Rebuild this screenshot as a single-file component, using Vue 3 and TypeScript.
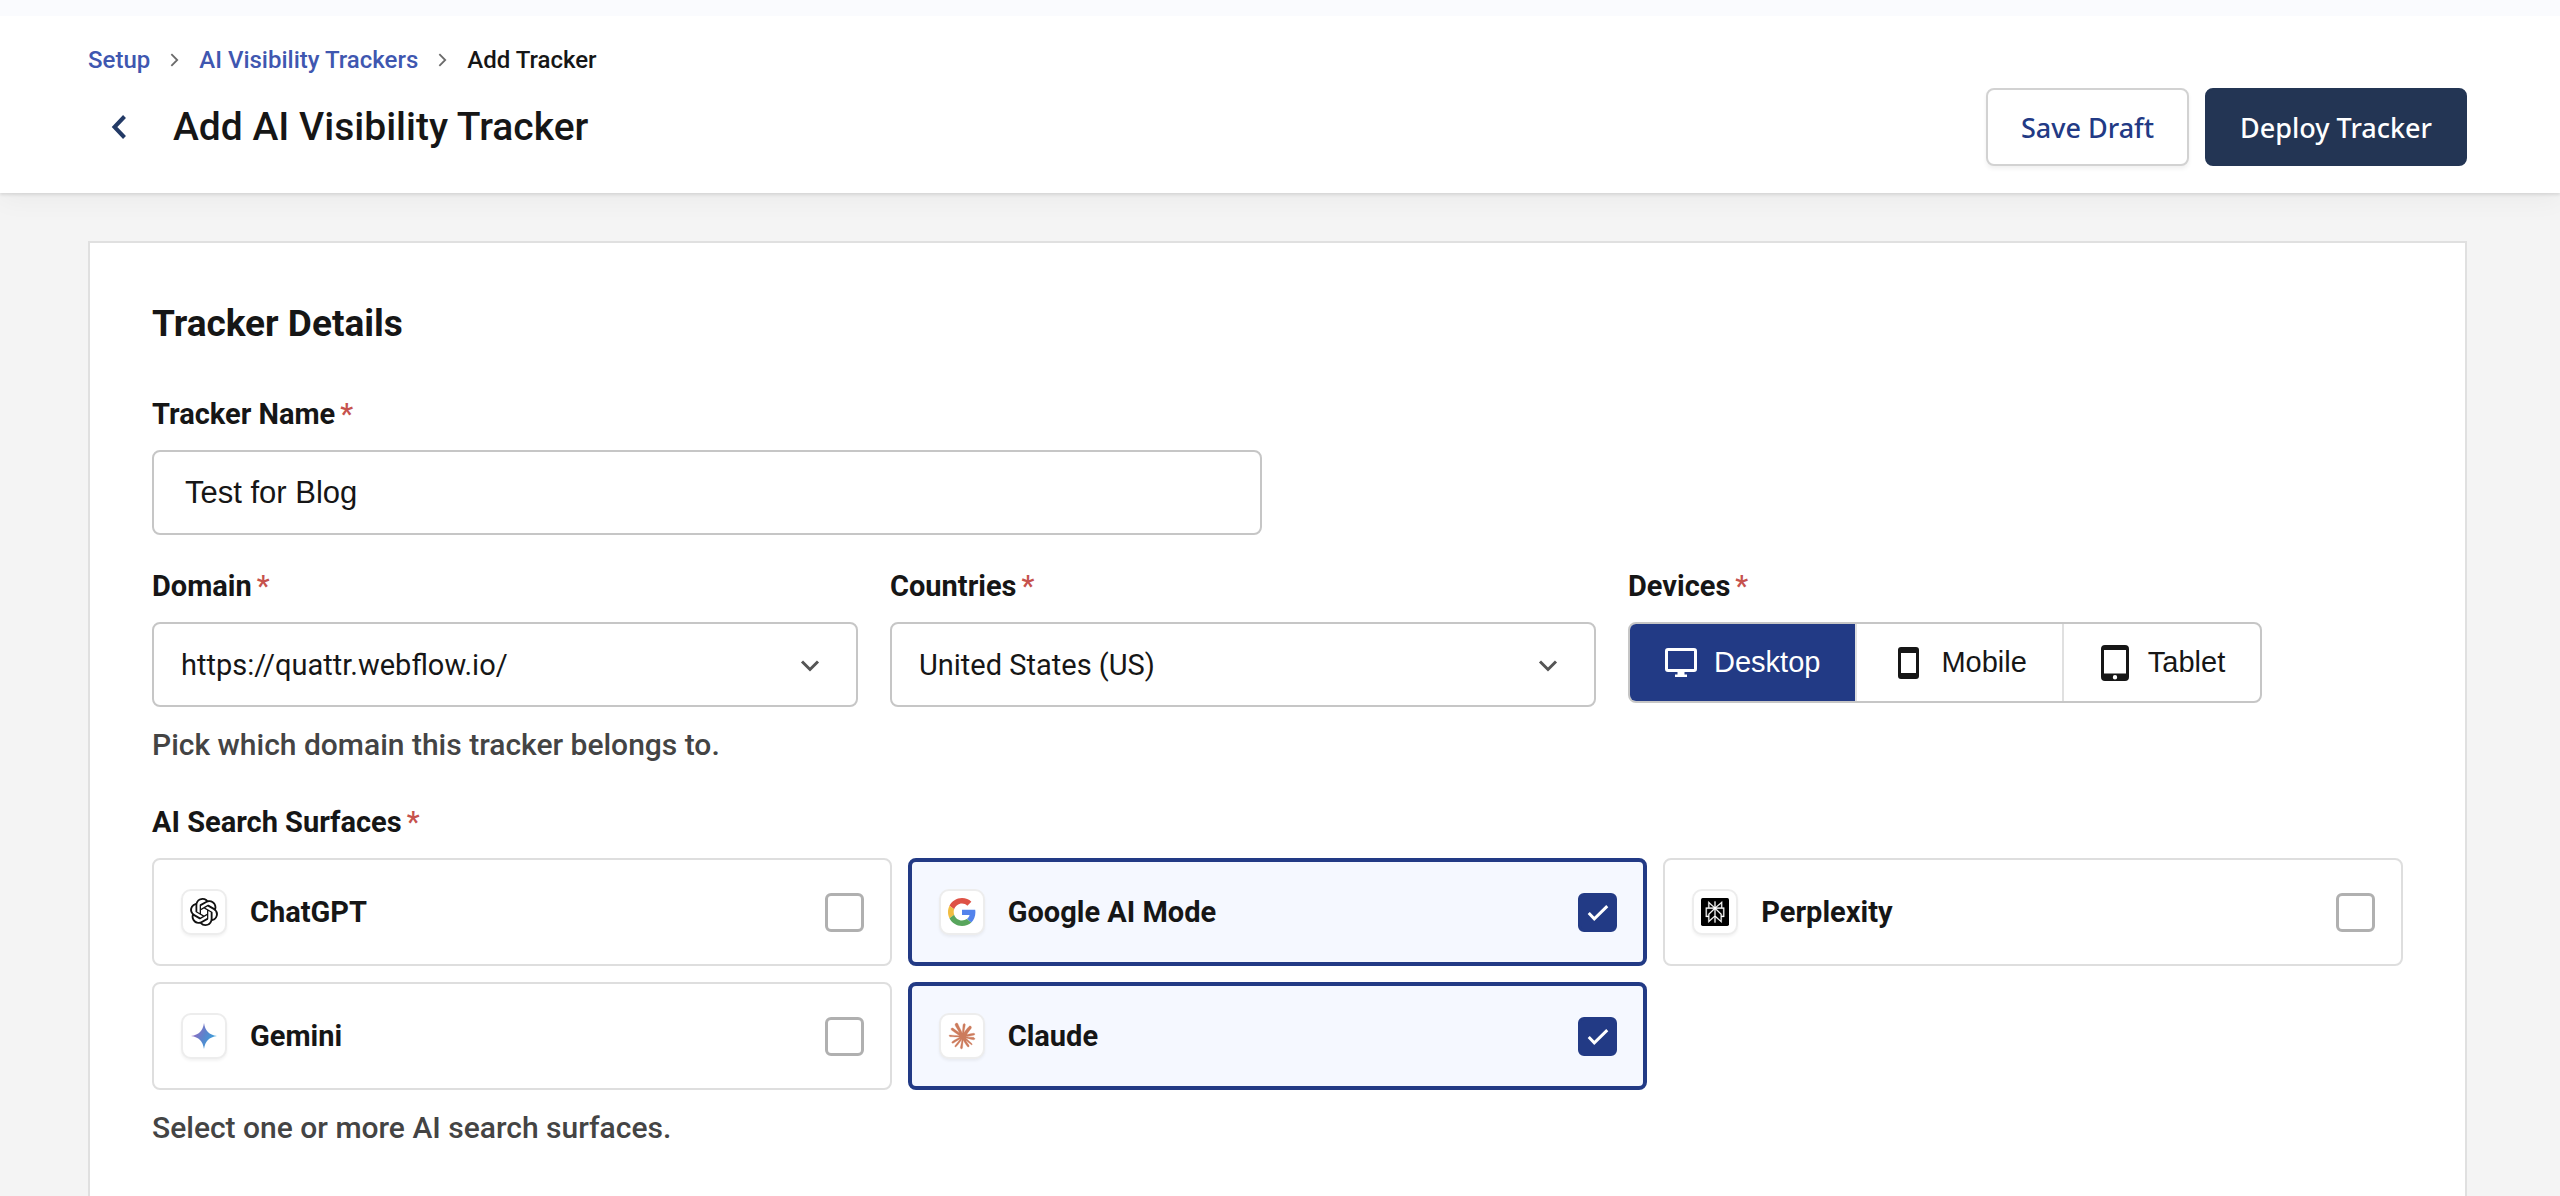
<script setup lang="ts">
import { ref } from 'vue'

type Surface = { id: string; label: string; checked: boolean }

const trackerName = ref('Test for Blog')
const domain = ref('https://quattr.webflow.io/')
const country = ref('United States (US)')
const device = ref('desktop')

const surfaces = ref<Surface[]>([
  { id: 'chatgpt', label: 'ChatGPT', checked: false },
  { id: 'google', label: 'Google AI Mode', checked: true },
  { id: 'perplexity', label: 'Perplexity', checked: false },
  { id: 'gemini', label: 'Gemini', checked: false },
  { id: 'claude', label: 'Claude', checked: true },
])
</script>

<template>
  <div class="page">
    <header class="header">
      <nav class="crumbs" aria-label="Breadcrumb">
        <a href="#setup">Setup</a>
        <svg class="crumb-sep" viewBox="0 0 10 16" aria-hidden="true"><path d="M1.500 1.500 8 8l-6.500 6.500" /></svg>
        <a href="#trackers">AI Visibility Trackers</a>
        <svg class="crumb-sep" viewBox="0 0 10 16" aria-hidden="true"><path d="M1.500 1.500 8 8l-6.500 6.500" /></svg>
        <span aria-current="page">Add Tracker</span>
      </nav>
      <div class="title-row">
        <button class="back" type="button" aria-label="Back">
          <svg viewBox="0 0 16 26" aria-hidden="true"><path d="M13.500 2.500 3.500 13l10 10.500" /></svg>
        </button>
        <h1>Add AI Visibility Tracker</h1>
        <div class="actions">
          <button class="btn btn-outline" type="button">Save Draft</button>
          <button class="btn btn-primary" type="button">Deploy Tracker</button>
        </div>
      </div>
    </header>

    <main class="main">
      <form class="card" @submit.prevent>
        <h2>Tracker Details</h2>

        <div class="field name-field">
          <label class="label" for="tracker-name">Tracker Name<span class="req">*</span></label>
          <input id="tracker-name" v-model="trackerName" class="text-input" type="text" />
        </div>

        <div class="row">
          <div class="field">
            <label class="label" for="domain">Domain<span class="req">*</span></label>
            <div class="select-box">
              <select id="domain" v-model="domain">
                <option>https://quattr.webflow.io/</option>
              </select>
              <svg viewBox="0 0 20 14" aria-hidden="true"><path d="M2 2.500 10 10.500l8-8" /></svg>
            </div>
            <p class="hint">Pick which domain this tracker belongs to.</p>
          </div>

          <div class="field">
            <label class="label" for="country">Countries<span class="req">*</span></label>
            <div class="select-box">
              <select id="country" v-model="country">
                <option>United States (US)</option>
              </select>
              <svg viewBox="0 0 20 14" aria-hidden="true"><path d="M2 2.500 10 10.500l8-8" /></svg>
            </div>
          </div>

          <fieldset class="field">
            <legend class="label">Devices<span class="req">*</span></legend>
            <div class="segments">
              <label class="segment" :class="{ active: device === 'desktop' }">
                <input v-model="device" type="radio" name="device" value="desktop" />
                <svg viewBox="0 0 32 32" aria-hidden="true">
                  <path fill-rule="evenodd" d="M3 1h26a3 3 0 0 1 3 3v18a3 3 0 0 1-3 3H19.500v2.500H22V30H10v-2.500h2.500V25H3a3 3 0 0 1-3-3V4a3 3 0 0 1 3-3zm0 3v18h26V4z" />
                </svg>
                <span>Desktop</span>
              </label>
              <label class="segment" :class="{ active: device === 'mobile' }">
                <input v-model="device" type="radio" name="device" value="mobile" />
                <svg viewBox="0 0 32 32" aria-hidden="true">
                  <path fill-rule="evenodd" d="M9 0h15a3 3 0 0 1 3 3v26a3 3 0 0 1-3 3H9a3 3 0 0 1-3-3V3a3 3 0 0 1 3-3zm0 6v20h15V6z" />
                </svg>
                <span>Mobile</span>
              </label>
              <label class="segment" :class="{ active: device === 'tablet' }">
                <input v-model="device" type="radio" name="device" value="tablet" />
                <svg viewBox="0 0 32 36" class="tall" aria-hidden="true">
                  <path fill-rule="evenodd" d="M6 0h20a4 4 0 0 1 4 4v28a4 4 0 0 1-4 4H6a4 4 0 0 1-4-4V4a4 4 0 0 1 4-4zm-1 5v23.500h22V5zm11 25a2.200 2.200 0 1 0 0 4.400 2.200 2.200 0 0 0 0-4.400z" />
                </svg>
                <span>Tablet</span>
              </label>
            </div>
          </fieldset>
        </div>

        <fieldset class="field surfaces">
          <legend class="label">AI Search Surfaces<span class="req">*</span></legend>
          <div class="surface-grid">
            <label v-for="s in surfaces" :key="s.id" class="surface" :class="{ selected: s.checked }">
              <span class="tile">
                <svg v-if="s.id === 'chatgpt'" viewBox="0 0 24 24" aria-hidden="true">
                  <path fill="#111" d="M22.2819 9.8211a5.9847 5.9847 0 0 0-.5157-4.9108 6.0462 6.0462 0 0 0-6.5098-2.9A6.0651 6.0651 0 0 0 4.9807 4.1818a5.9847 5.9847 0 0 0-3.9977 2.9 6.0462 6.0462 0 0 0 .7427 7.0966 5.98 5.98 0 0 0 .511 4.9107 6.051 6.051 0 0 0 6.5146 2.9001A5.9847 5.9847 0 0 0 13.2599 24a6.0557 6.0557 0 0 0 5.7718-4.2058 5.9894 5.9894 0 0 0 3.9977-2.9001 6.0557 6.0557 0 0 0-.7475-7.0729zm-9.022 12.6081a4.4755 4.4755 0 0 1-2.8764-1.0408l.1419-.0804 4.7783-2.7582a.7948.7948 0 0 0 .3927-.6813v-6.7369l2.02 1.1686a.071.071 0 0 1 .038.052v5.5826a4.504 4.504 0 0 1-4.4945 4.4944zm-9.6607-4.1254a4.4708 4.4708 0 0 1-.5346-3.0137l.142.0852 4.783 2.7582a.7712.7712 0 0 0 .7806 0l5.8428-3.3685v2.3324a.0804.0804 0 0 1-.0332.0615L9.74 19.9502a4.4992 4.4992 0 0 1-6.1408-1.6464zM2.3408 7.8956a4.485 4.485 0 0 1 2.3655-1.9728V11.6a.7664.7664 0 0 0 .3879.6765l5.8144 3.3543-2.0201 1.1685a.0757.0757 0 0 1-.071 0l-4.8303-2.7865A4.504 4.504 0 0 1 2.3408 7.872zm16.5963 3.8558L13.1038 8.364 15.1192 7.2a.0757.0757 0 0 1 .071 0l4.8303 2.7913a4.4944 4.4944 0 0 1-.6765 8.1042v-5.6772a.79.79 0 0 0-.407-.667zm2.0107-3.0231l-.142-.0852-4.7735-2.7818a.7759.7759 0 0 0-.7854 0L9.409 9.2297V6.8974a.0662.0662 0 0 1 .0284-.0615l4.8303-2.7866a4.4992 4.4992 0 0 1 6.6802 4.66zM8.3065 12.863l-2.02-1.1638a.0804.0804 0 0 1-.038-.0567V6.0742a4.4992 4.4992 0 0 1 7.3757-3.4537l-.142.0805L8.704 5.459a.7948.7948 0 0 0-.3927.6813zm1.0976-2.3654l2.602-1.4998 2.6069 1.4998v2.9994l-2.5974 1.4997-2.6067-1.4997Z" />
                </svg>
                <svg v-else-if="s.id === 'google'" viewBox="0 0 48 48" aria-hidden="true">
                  <path fill="#de5246" d="M24 9.500c3.540 0 6.710 1.220 9.210 3.600l6.850-6.850C35.900 2.380 30.470 0 24 0 14.620 0 6.510 5.380 2.560 13.220l7.980 6.190C12.430 13.720 17.740 9.500 24 9.500z" />
                  <path fill="#5383ec" d="M46.980 24.550c0-1.570-.15-3.090-.38-4.550H24v9.020h12.940c-.58 2.960-2.260 5.480-4.780 7.180l7.730 6c4.510-4.180 7.090-10.360 7.090-17.650z" />
                  <path fill="#f1bd42" d="M10.530 28.590c-.48-1.450-.76-2.990-.76-4.590s.27-3.140.76-4.590l-7.980-6.190C.92 16.460 0 20.120 0 24c0 3.880.92 7.540 2.560 10.780l7.970-6.190z" />
                  <path fill="#58a55c" d="M24 48c6.480 0 11.930-2.130 15.890-5.810l-7.730-6c-2.150 1.450-4.920 2.300-8.160 2.300-6.260 0-11.570-4.220-13.470-9.910l-7.980 6.190C6.510 42.620 14.620 48 24 48z" />
                </svg>
                <svg v-else-if="s.id === 'perplexity'" viewBox="0 0 34 34" aria-hidden="true">
                  <rect width="34" height="34" rx="2" />
                  <path fill="#fff" stroke="#fff" stroke-width="0.300" transform="translate(4 4) scale(1.083)" d="M22.3977 7.0896h-2.3106V.0676l-7.5094 6.3542V.1577h-1.1554v6.1966L4.4904 0v7.0896H1.6023v10.3976h2.8882V24l6.932-6.3591v6.2005h1.1554v-6.0469l6.9318 6.1807v-6.4879h2.8882V7.0896zm-3.4657-4.531v4.531h-5.355l5.355-4.531zm-13.2862.0676 4.8691 4.4634H5.6458V2.6262zM2.7576 16.332V8.245h7.8476l-6.1149 6.1147v1.9723H2.7576zm2.8882 5.0404v-3.8852h.0001v-2.6488l5.7763-5.7764v7.0111l-5.7764 5.2993zm12.7086.0248-5.7766-5.1509V9.0618l5.7766 5.7766v6.5588zm2.8882-5.0652h-1.733v-1.9723L13.3948 8.245h7.8478v8.087z" />
                </svg>
                <svg v-else-if="s.id === 'gemini'" viewBox="0 0 28 28" aria-hidden="true">
                  <defs>
                    <linearGradient id="gemini-fill" x1="2" y1="8" x2="25" y2="20" gradientUnits="userSpaceOnUse">
                      <stop offset="0" stop-color="#9b68c0" />
                      <stop offset="0.500" stop-color="#5c83cc" />
                      <stop offset="1" stop-color="#35a6dd" />
                    </linearGradient>
                  </defs>
                  <path fill="url(#gemini-fill)" d="M14 1c1.200 8 5 11.800 13 13-8 1.200-11.800 5-13 13-1.200-8-5-11.800-13-13 8-1.200 11.800-5 13-13z" />
                </svg>
                <svg v-else viewBox="-1 -1 26 26" aria-hidden="true">
                  <path fill="#cc7b5c" stroke="#cc7b5c" stroke-width="0.300" d="m4.7144 15.9555 4.7174-2.6471.079-.2307-.079-.1275h-.2307l-.7893-.0486-2.6956-.0729-2.3375-.0971-2.2646-.1214-.5707-.1215-.5343-.7042.0546-.3522.4797-.3218.686.0608 1.5179.1032 2.2767.1578 1.6514.0972 2.4468.255h.3886l.0546-.1579-.1336-.0971-.1032-.0972L6.973 9.8356l-2.55-1.6879-1.3356-.9714-.7225-.4918-.3643-.4614-.1578-1.0078.6557-.7225.8803.0607.2246.0607.8925.686 1.9064 1.4754 2.4893 1.8336.3643.3035.1457-.1032.0182-.0728-.164-.2733-1.3539-2.4467-1.445-2.4893-.6435-1.032-.17-.6194c-.0607-.255-.1032-.4674-.1032-.7285L6.287.1335 6.6997 0l.9957.1336.419.3642.6192 1.4147 1.0018 2.2282 1.5543 3.0296.4553.8985.2429.8318.091.255h.1579v-.1457l.1275-1.706.2368-2.0947.2307-2.6957.0789-.7589.3764-.9107.7468-.4918.5828.2793.4797.686-.0668.4433-.2853 1.8517-.5586 2.9021-.3643 1.9429h.2125l.2429-.2429.9835-1.3053 1.6514-2.0643.7286-.8196.85-.9046.5464-.4311h1.0321l.759 1.1293-.34 1.1657-1.0625 1.3478-.8804 1.1414-1.2628 1.7-.7893 1.36.0729.1093.1882-.0183 2.8535-.607 1.5421-.2794 1.8396-.3157.8318.3886.091.3946-.3278.8075-1.967.4857-2.3072.4614-3.4364.8136-.0425.0304.0486.0607 1.5482.1457.6618.0364h1.621l3.0175.2247.7892.522.4736.6376-.079.4857-1.2142.6193-1.6393-.3886-3.825-.9107-1.3113-.3279h-.1822v.1093l1.0929 1.0686 2.0035 1.8092 2.5075 2.3314.1275.5768-.3218.4554-.34-.0486-2.2039-1.6575-.85-.7468-1.9246-1.621h-.1275v.17l.4432.6496 2.3436 3.5214.1214 1.0807-.17.3521-.6071.2125-.6679-.1214-1.3721-1.9246L14.38 17.959l-1.1414-1.9428-.1397.079-.674 7.2552-.3156.3703-.7286.2793-.6071-.4614-.3218-.7468.3218-1.4753.3886-1.9246.3157-1.53.2853-1.9004.17-.6314-.0121-.0425-.1397.0182-1.4328 1.9672-2.1796 2.9446-1.7243 1.8456-.4128.164-.7164-.3704.0667-.6618.4008-.5889 2.386-3.0357 1.4389-1.882.929-1.0868-.0062-.1579h-.0546l-6.3385 4.1164-1.1293.1457-.4857-.4554.0608-.7467.2307-.2429 1.9064-1.3114Z" />
                </svg>
              </span>
              <span class="surface-name">{{ s.label }}</span>
              <span class="check">
                <input v-model="s.checked" type="checkbox" />
                <svg v-if="s.checked" viewBox="0 0 40 40" aria-hidden="true"><path d="m11 20.500 5.700 6L30 13.500" /></svg>
              </span>
            </label>
          </div>
          <p class="hint">Select one or more AI search surfaces.</p>
        </fieldset>
      </form>
    </main>
  </div>
</template>

<style>
body {
  margin: 0;
  background: #f4f4f4;
}
</style>

<style scoped>
.page,
.page * {
  box-sizing: border-box;
}

.page {
  display: flex;
  flex-direction: column;
  min-height: 100vh;
  font-family: Roboto, "Liberation Sans", sans-serif;
  color: #161616;
  background: #f4f4f4;
}

.header {
  padding: 30px 93px 27px 88px;
  border-top: 16px solid #fafbfe;
  background: #fff;
  box-shadow: 0 2px 3px rgba(0, 0, 0, 0.1), 0 8px 24px rgba(0, 0, 0, 0.04);
}

.crumbs {
  display: flex;
  align-items: center;
  gap: 20px;
  font-size: 24px;
  font-weight: 500;
  line-height: 28px;
}

.crumbs a {
  color: #3f57b0;
  text-decoration: none;
}

.crumb-sep {
  width: 9px;
  height: 16px;
  fill: none;
  stroke: #6b6b6b;
  stroke-width: 2;
}

.title-row {
  display: flex;
  align-items: center;
  margin-top: 14px;
}

.back {
  display: flex;
  align-items: center;
  justify-content: center;
  width: 62px;
  height: 62px;
  margin-right: 23px;
  padding: 0;
  border: 0;
  background: none;
}

.back svg {
  width: 16px;
  height: 26px;
  fill: none;
  stroke: #233a66;
  stroke-width: 4;
}

h1 {
  margin: 0;
  font-size: 39px;
  font-weight: 500;
  line-height: 48px;
}

.actions {
  display: flex;
  gap: 16px;
  margin-left: auto;
}

.btn {
  height: 78px;
  padding: 0 33px;
  border: 2px solid #d2d2d2;
  border-radius: 8px;
  font-family: "Noto Sans", sans-serif;
  font-size: 27px;
  font-weight: 500;
}

.btn-outline {
  background: #fff;
  color: #223a85;
  box-shadow: 0 3px 4px rgba(0, 0, 0, 0.06);
}

.btn-primary {
  border-color: #233554;
  background: #233554;
  color: #fff;
}

.main {
  display: flex;
  flex: 1;
  padding: 48px 93px 0 88px;
}

.card {
  flex: 1;
  padding: 59px 62px 48px;
  border: 2px solid #e0e0e0;
  border-bottom: 0;
  background: #fff;
}

h2 {
  margin: 0 0 52px;
  font-size: 37px;
  font-weight: 700;
  line-height: 44px;
}

.field {
  min-width: 0;
  margin: 0;
  padding: 0;
  border: 0;
}

.label {
  display: block;
  margin-bottom: 20px;
  padding: 0;
  font-size: 29px;
  font-weight: 700;
  line-height: 32px;
}

.req {
  margin-left: 5px;
  color: #c6524d;
  font-weight: 500;
}

.name-field {
  width: calc(50% - 16px);
}

.text-input,
.select-box select {
  display: block;
  width: 100%;
  height: 85px;
  border: 2px solid #c6c6c6;
  border-radius: 8px;
  background: #fff;
  color: #161616;
}

.text-input {
  padding: 0 31px;
  font-family: "Liberation Sans", Arial, sans-serif;
  font-size: 31px;
}

.row {
  display: grid;
  grid-template-columns: 706fr 706fr 775fr;
  gap: 32px;
  margin-top: 35px;
}

.select-box {
  position: relative;
}

.select-box select {
  appearance: none;
  padding: 0 72px 0 27px;
  font-family: Roboto, sans-serif;
  font-size: 29px;
}

.select-box svg {
  position: absolute;
  top: 37px;
  right: 38px;
  width: 20px;
  height: 14px;
  fill: none;
  stroke: #555;
  stroke-width: 3;
  pointer-events: none;
}

.hint {
  margin: 22px 0 0;
  font-size: 30px;
  font-weight: 500;
  line-height: 32px;
  color: #444;
}

.segments {
  display: inline-flex;
  height: 81px;
  border: 2px solid #c6c6c6;
  border-radius: 8px;
  overflow: hidden;
}

.segment {
  display: flex;
  align-items: center;
  gap: 17px;
  padding: 0 35px;
  font-family: "Liberation Sans", Arial, sans-serif;
  font-size: 29px;
}

.segment + .segment {
  border-left: 2px solid #e0e0e0;
}

.segment.active {
  background: #223a85;
  color: #fff;
}

.segment input {
  position: absolute;
  opacity: 0;
}

.segment svg {
  width: 32px;
  height: 32px;
  fill: currentColor;
}

.segment .tall {
  height: 36px;
}

.surfaces {
  margin-top: 45px;
}

.surface-grid {
  display: grid;
  grid-template-columns: repeat(3, 1fr);
  gap: 16px;
}

.surface {
  display: flex;
  align-items: center;
  height: 108px;
  padding: 0 26px 0 27px;
  border: 2px solid #dedede;
  border-radius: 8px;
}

.surface.selected {
  border: 4px solid #223a85;
  background: #f5f8ff;
}

.tile {
  display: flex;
  align-items: center;
  justify-content: center;
  width: 46px;
  height: 46px;
  margin-right: 23px;
  border: 2px solid #ededed;
  border-radius: 10px;
  background: #fff;
  box-shadow: 0 2px 3px rgba(0, 0, 0, 0.05);
}

.tile svg {
  width: 28px;
  height: 28px;
}

.surface-name {
  flex: 1;
  font-size: 29px;
  font-weight: 700;
  line-height: 32px;
}

.check {
  position: relative;
  width: 39px;
  height: 39px;
}

.check input {
  appearance: none;
  display: block;
  width: 100%;
  height: 100%;
  margin: 0;
  border: 3px solid #b0b0b0;
  border-radius: 6px;
  background: #fff;
}

.check input:checked {
  border-color: #223a85;
  background: #223a85;
}

.check svg {
  position: absolute;
  inset: 0;
  fill: none;
  stroke: #fff;
  stroke-width: 3;
  pointer-events: none;
}
</style>
